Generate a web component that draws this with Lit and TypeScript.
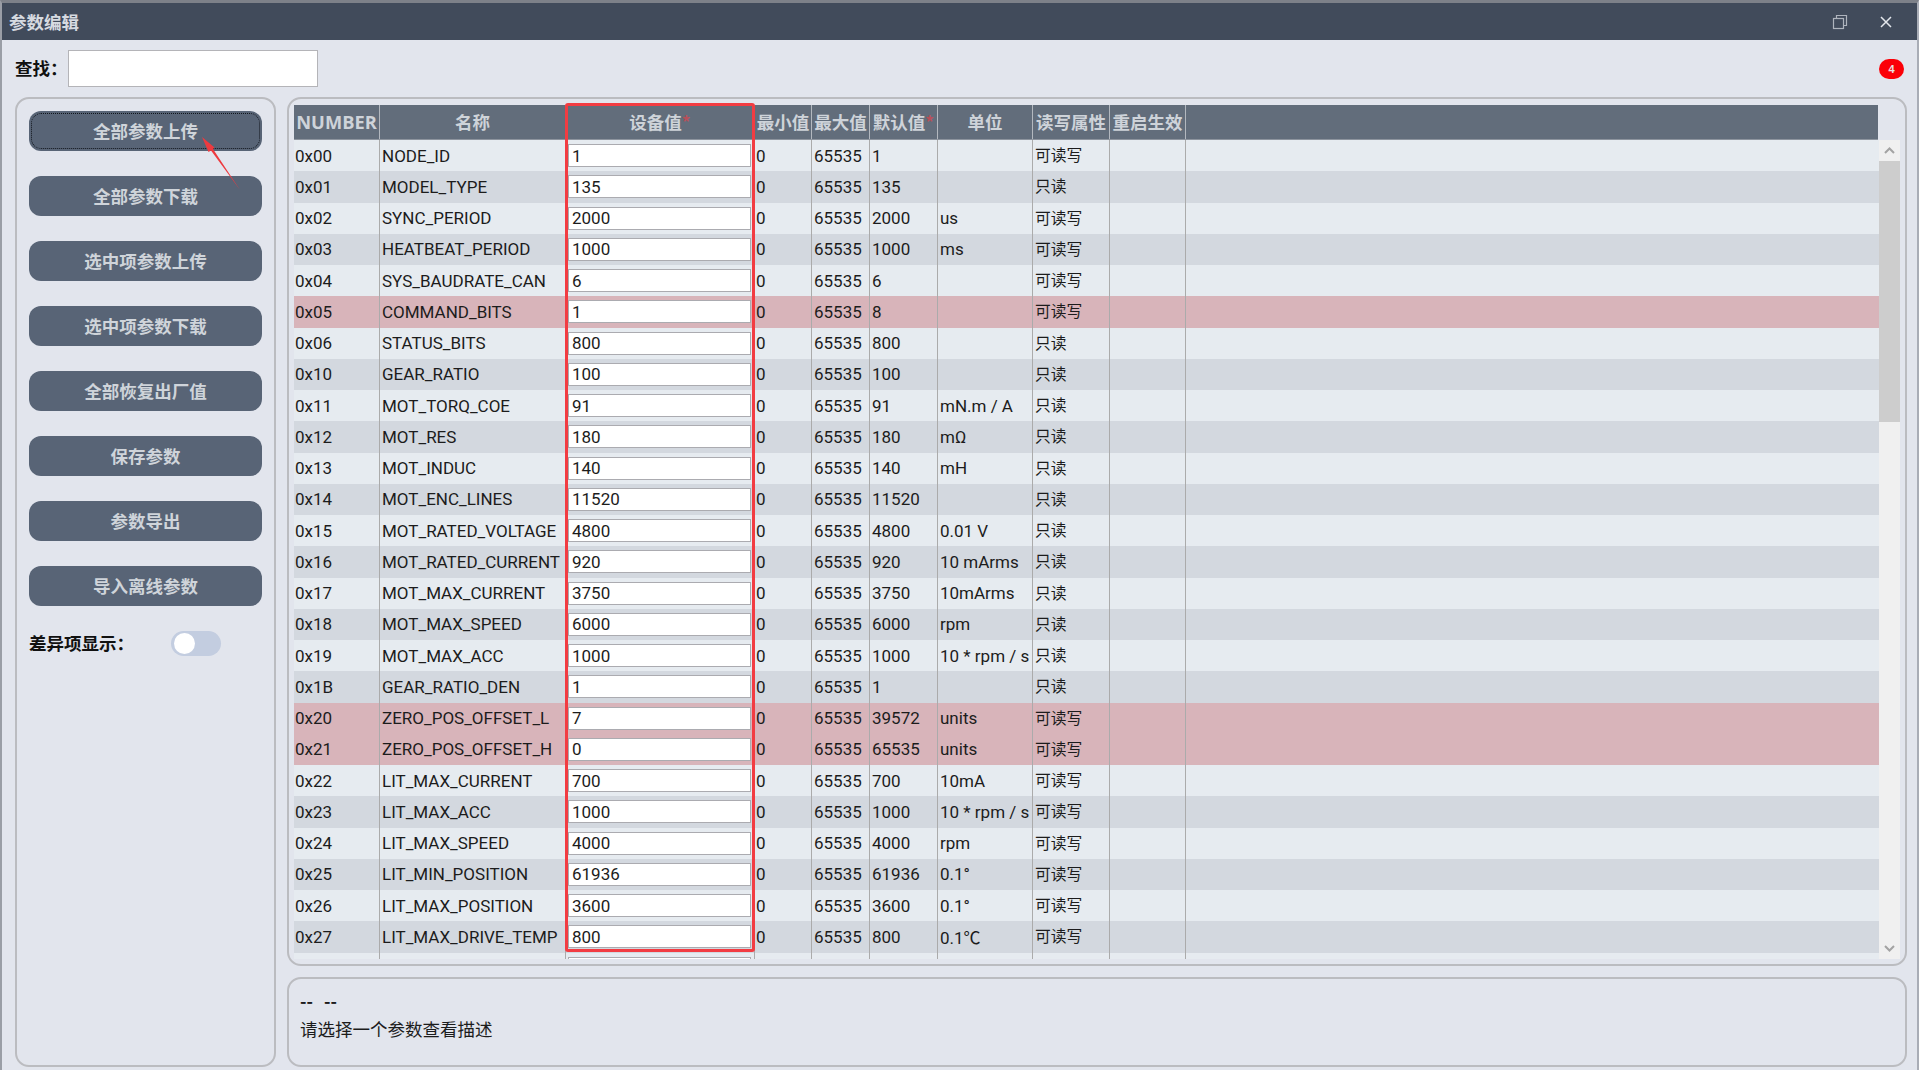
import { LitElement, css, html } from 'lit'
import { customElement } from 'lit/decorators.js'

type Row = [string, string, string, string, string, string, boolean?]

const RW = '可读写'
const RO = '只读'

const ROWS: Row[] = [
  ['0x00', 'NODE_ID', '1', '1', '', RW],
  ['0x01', 'MODEL_TYPE', '135', '135', '', RO],
  ['0x02', 'SYNC_PERIOD', '2000', '2000', 'us', RW],
  ['0x03', 'HEATBEAT_PERIOD', '1000', '1000', 'ms', RW],
  ['0x04', 'SYS_BAUDRATE_CAN', '6', '6', '', RW],
  ['0x05', 'COMMAND_BITS', '1', '8', '', RW, true],
  ['0x06', 'STATUS_BITS', '800', '800', '', RO],
  ['0x10', 'GEAR_RATIO', '100', '100', '', RO],
  ['0x11', 'MOT_TORQ_COE', '91', '91', 'mN.m / A', RO],
  ['0x12', 'MOT_RES', '180', '180', 'mΩ', RO],
  ['0x13', 'MOT_INDUC', '140', '140', 'mH', RO],
  ['0x14', 'MOT_ENC_LINES', '11520', '11520', '', RO],
  ['0x15', 'MOT_RATED_VOLTAGE', '4800', '4800', '0.01 V', RO],
  ['0x16', 'MOT_RATED_CURRENT', '920', '920', '10 mArms', RO],
  ['0x17', 'MOT_MAX_CURRENT', '3750', '3750', '10mArms', RO],
  ['0x18', 'MOT_MAX_SPEED', '6000', '6000', 'rpm', RO],
  ['0x19', 'MOT_MAX_ACC', '1000', '1000', '10 * rpm / s', RO],
  ['0x1B', 'GEAR_RATIO_DEN', '1', '1', '', RO],
  ['0x20', 'ZERO_POS_OFFSET_L', '7', '39572', 'units', RW, true],
  ['0x21', 'ZERO_POS_OFFSET_H', '0', '65535', 'units', RW, true],
  ['0x22', 'LIT_MAX_CURRENT', '700', '700', '10mA', RW],
  ['0x23', 'LIT_MAX_ACC', '1000', '1000', '10 * rpm / s', RW],
  ['0x24', 'LIT_MAX_SPEED', '4000', '4000', 'rpm', RW],
  ['0x25', 'LIT_MIN_POSITION', '61936', '61936', '0.1°', RW],
  ['0x26', 'LIT_MAX_POSITION', '3600', '3600', '0.1°', RW],
  ['0x27', 'LIT_MAX_DRIVE_TEMP', '800', '800', '0.1℃', RW],
]

const BUTTONS = ['全部参数上传', '全部参数下载', '选中项参数上传', '选中项参数下载', '全部恢复出厂值', '保存参数', '参数导出', '导入离线参数']

@customElement('app-root')
export class AppRoot extends LitElement {
  renderRow(r: Row, i: number) {
    return html`<div class="row ${r[6] ? 'diff' : i % 2 ? 'even' : 'odd'}">
      <div class="cell first">${r[0]}</div>
      <div class="cell">${r[1]}</div>
      <div class="cell dev"><input class="val" .value=${r[2]} /></div>
      <div class="cell first">${r[0] ? '0' : ''}</div>
      <div class="cell">${r[0] ? '65535' : ''}</div>
      <div class="cell">${r[3]}</div>
      <div class="cell">${r[4]}</div>
      <div class="cell cjk">${r[5]}</div>
      <div class="cell"></div>
      <div class="cell last"></div>
    </div>`
  }

  render() {
    return html`
      <div class="title">
        <span class="title-text">参数编辑</span>
        <svg class="win" width="16" height="16" viewBox="0 0 16 16" fill="none" stroke="#aeb4bd" stroke-width="1.2">
          <rect x="1.5" y="4.5" width="10" height="10" />
          <path d="M4.5 4.5V1.5H14.5V11.5H11.5" />
        </svg>
        <svg class="win close" width="14" height="14" viewBox="0 0 14 14" fill="none" stroke="#e4e7ec" stroke-width="1.5">
          <path d="M2 2L12 12M12 2L2 12" />
        </svg>
      </div>
      <div class="search">
        <label>查找：</label>
        <input class="find" />
        <span class="badge">4</span>
      </div>
      <div class="content">
        <div class="panel side">
          ${BUTTONS.map((b, i) => html`<button class="btn ${i === 0 ? 'focused' : ''}">${b}</button>`)}
          <div class="toggle-row">
            <span>差异项显示：</span>
            <span class="toggle"><span class="knob"></span></span>
          </div>
        </div>
        <div class="main">
          <div class="panel table-panel">
            <div class="table">
              <div class="head">
                <div class="th">NUMBER</div>
                <div class="th">名称</div>
                <div class="th">设备值<i>*</i></div>
                <div class="th">最小值</div>
                <div class="th">最大值</div>
                <div class="th">默认值<i>*</i></div>
                <div class="th">单位</div>
                <div class="th">读写属性</div>
                <div class="th">重启生效</div>
                <div class="th end"></div>
              </div>
              ${ROWS.map((r, i) => this.renderRow(r, i))}
              ${this.renderRow(['', '', '', '', '', ''], ROWS.length)}
            </div>
            <div class="scroll">
              <svg class="arrow" width="21" height="21" viewBox="0 0 21 21" fill="none" stroke="#a3a3a3" stroke-width="2">
                <path d="M6 13L10.5 8.5L15 13" />
              </svg>
              <div class="thumb"></div>
              <svg class="arrow end-arrow" width="21" height="21" viewBox="0 0 21 21" fill="none" stroke="#a3a3a3" stroke-width="2">
                <path d="M6 8L10.5 12.5L15 8" />
              </svg>
            </div>
          </div>
          <div class="panel desc">
            <div class="desc-name"><span>--</span><span>--</span></div>
            <div>请选择一个参数查看描述</div>
          </div>
        </div>
      </div>
      <div class="mark-box"></div>
      <svg class="mark-arrow" width="60" height="70" viewBox="0 0 60 70">
        <path d="M2 2L14.5 12.5L13 14L40 55L11 15.5L8.5 17Z" fill="#ee3a3f" />
      </svg>
    `
  }

  static styles = css`
    :host {
      display: flex;
      flex-direction: column;
      position: relative;
      box-sizing: border-box;
      width: 1919px;
      height: 1070px;
      overflow: hidden;
      background: #e2e5ed;
      border-top: 3px solid #7d8189;
      border-left: 2px solid #9a9ea6;
      border-right: 2px solid #a9adb6;
      font-family: Roboto, 'Noto Sans CJK SC', sans-serif;
      font-size: 17px;
      color: #1c1c1c;
    }

    * {
      box-sizing: border-box;
    }

    .title {
      display: flex;
      align-items: center;
      height: 37px;
      flex: none;
      padding: 0 24px 0 7px;
      background: #414b5b;
      color: #d6dae0;
    }

    .title-text {
      flex: 1;
      font-family: 'Noto Sans CJK SC', sans-serif;
      font-size: 17.5px;
      font-weight: 700;
    }

    .win {
      display: block;
    }

    .close {
      margin-left: 31px;
    }

    .search {
      display: flex;
      align-items: center;
      height: 57px;
      flex: none;
      padding: 10px 13px 10px 13px;
    }

    .search label {
      width: 53px;
      flex: none;
      padding-bottom: 2px;
      font-family: 'Noto Sans CJK SC', sans-serif;
      font-size: 17.5px;
      font-weight: 700;
      color: #111;
      white-space: nowrap;
    }

    .find {
      width: 250px;
      height: 37px;
      border: 1px solid #b4b4b8;
      background: #fff;
      outline: none;
    }

    .badge {
      margin-left: auto;
      width: 25px;
      height: 20px;
      border-radius: 10px;
      background: #fb0007;
      color: #e8e2e2;
      font: 700 11px/20px 'Liberation Sans', sans-serif;
      text-align: center;
    }

    .content {
      flex: 1;
      display: flex;
      gap: 11px;
      min-height: 0;
      padding: 0 10px 3px 13px;
    }

    .panel {
      border: 2px solid #bbbcc0;
      border-radius: 14px;
    }

    .side {
      display: flex;
      flex-direction: column;
      gap: 25px;
      width: 261px;
      flex: none;
      padding: 12px 12px 0;
    }

    .btn {
      display: block;
      width: 233px;
      height: 40px;
      padding: 0 0 2px;
      border: 0;
      border-radius: 12px;
      background: #586476;
      color: #cfd4da;
      font-family: 'Noto Sans CJK SC', sans-serif;
      font-size: 17.5px;
      font-weight: 700;
    }

    .focused {
      outline: 1px dotted #10151c;
      outline-offset: -3px;
    }

    .toggle-row {
      display: flex;
      align-items: center;
      justify-content: space-between;
      height: 26px;
      margin-top: -1px;
      padding-right: 41px;
      font-family: 'Noto Sans CJK SC', sans-serif;
      font-size: 17.5px;
      font-weight: 700;
      color: #111;
    }

    .toggle-row > span:first-child {
      padding-bottom: 2px;
    }

    .toggle {
      display: block;
      width: 50px;
      height: 25px;
      padding: 2px 3px;
      border-radius: 13px;
      background: #c3cde0;
    }

    .knob {
      display: block;
      width: 21px;
      height: 21px;
      border-radius: 50%;
      background: #fff;
    }

    .main {
      flex: 1;
      display: flex;
      flex-direction: column;
      gap: 11px;
      min-width: 0;
    }

    .table-panel {
      display: flex;
      height: 869px;
      flex: none;
      padding: 6px 6px 5px 5px;
    }

    .table {
      width: 1585px;
      flex: none;
      overflow: hidden;
    }

    .head,
    .row {
      display: grid;
      grid-template-columns: 86px 186px 189px 57px 58px 68px 95px 77px 76px 1fr;
    }

    .head {
      height: 35px;
      margin-right: 1px;
      background: #626d7b;
      border-bottom: 1px solid #8d949e;
    }

    .th {
      display: flex;
      align-items: center;
      justify-content: center;
      min-width: 0;
      padding-bottom: 2px;
      border-right: 1px solid #b3b8bf;
      color: #ced3d9;
      font-family: 'Noto Sans CJK SC', sans-serif;
      font-size: 17.5px;
      font-weight: 700;
      white-space: nowrap;
    }

    .th:first-child {
      font-family: 'Open Sans', sans-serif;
      font-size: 18.3px;
    }

    .th i {
      color: #b7505a;
      font-style: normal;
    }

    .th.end {
      border-right: 0;
    }

    .row {
      height: 31.25px;
    }

    .odd {
      background: #e6ebf0;
    }

    .even {
      background: #d3d8df;
    }

    .diff {
      background: #d8b4ba;
    }

    .cell {
      display: flex;
      align-items: center;
      min-width: 0;
      padding-left: 2px;
      border-right: 1px solid #ababab;
      white-space: nowrap;
      overflow: hidden;
    }

    .cell.first {
      padding-left: 1px;
    }

    .cell.cjk {
      padding-bottom: 2px;
      font-size: 15.8px;
    }

    .cell.last {
      border-right: 0;
    }

    .dev {
      padding: 0 3px 0 2px;
    }

    .val {
      width: 100%;
      height: 23px;
      padding: 0 3px;
      border: 1px solid #ababb0;
      background: #fff;
      color: inherit;
      font: inherit;
      outline: none;
    }

    .scroll {
      display: flex;
      flex-direction: column;
      width: 21px;
      flex: none;
      margin-top: 35px;
      background: #f0f0f0;
    }

    .arrow {
      display: block;
      flex: none;
    }

    .end-arrow {
      margin-top: auto;
    }

    .thumb {
      height: 261px;
      flex: none;
      background: #cdcdcd;
    }

    .desc {
      flex: 1;
      padding: 8px 11px;
      font-family: 'Noto Sans CJK SC', sans-serif;
      font-size: 17.5px;
      line-height: 28px;
    }

    .desc-name {
      display: flex;
      gap: 11px;
      font-weight: 700;
    }

    .mark-box {
      position: absolute;
      left: 563px;
      top: 100px;
      width: 190px;
      height: 849px;
      border: 3px solid #f23c42;
      border-radius: 3px;
      pointer-events: none;
    }

    .mark-arrow {
      position: absolute;
      left: 198px;
      top: 132px;
      pointer-events: none;
    }
  `
}

declare global {
  interface HTMLElementTagNameMap {
    'app-root': AppRoot
  }
}
